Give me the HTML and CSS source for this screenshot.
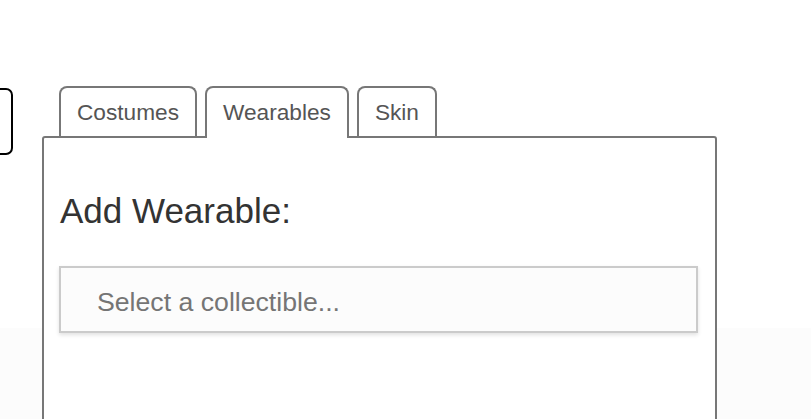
FILE: index.html
```html
<!DOCTYPE html>
<html>
<head>
<meta charset="utf-8">
<link rel="stylesheet" href="styles.css">
</head>
<body>
<div class="page">
  <div class="side-btn"></div>
  <div class="widget">
    <div class="tabs">
      <div class="tab">Costumes</div>
      <div class="tab active">Wearables</div>
      <div class="tab">Skin</div>
    </div>
    <div class="panel">
      <h2 class="heading">Add Wearable:</h2>
      <div class="select">Select a collectible...</div>
    </div>
  </div>
</div>
</body>
</html>
```

FILE: styles.css
```css
html, body {
  margin: 0;
  padding: 0;
}
body {
  width: 811px;
  height: 419px;
  overflow: hidden;
  font-family: "Liberation Sans", Arial, sans-serif;
  background: linear-gradient(to bottom, #ffffff 0, #ffffff 328px, #fcfcfc 328px, #fcfcfc 100%);
}
.page {
  display: flex;
  align-items: flex-start;
  padding-top: 86px;
}
.side-btn {
  box-sizing: border-box;
  width: 60px;
  height: 67px;
  margin-left: -47px;
  margin-top: 2px;
  border: 2px solid #000;
  border-radius: 7px;
  flex-shrink: 0;
}
.widget {
  margin-left: 29px;
  width: 675px;
  flex-shrink: 0;
}
.tabs {
  display: flex;
  align-items: flex-start;
  gap: 8px;
  padding-left: 17px;
  height: 50px;
}
.tab {
  box-sizing: border-box;
  height: 50px;
  padding: 0 16px;
  border: 2px solid #777;
  border-bottom: none;
  border-radius: 8px 8px 0 0;
  background: #fff;
  color: #555;
  font-size: 22.67px;
  line-height: 48px;
  white-space: nowrap;
}
.tab.active {
  height: 52px;
  position: relative;
  z-index: 1;
}
.panel {
  box-sizing: border-box;
  height: 300px;
  border: 2px solid #777;
  border-radius: 3px 3px 0 0;
  background: #fff;
  padding: 0 17px 0 16px;
}
.heading {
  margin: 53px 0 0 0;
  font-size: 35px;
  font-weight: normal;
  line-height: normal;
  color: #333;
}
.select {
  box-sizing: border-box;
  margin: 35px 0 0 -1px;
  height: 67px;
  border: 2px solid #cbcbcb;
  background: #fcfcfc;
  box-shadow: 0 2px 4px rgba(0, 0, 0, 0.12);
  padding: 19px 0 0 36px;
  font-size: 26.67px;
  line-height: 31px;
  color: #757575;
}
```
